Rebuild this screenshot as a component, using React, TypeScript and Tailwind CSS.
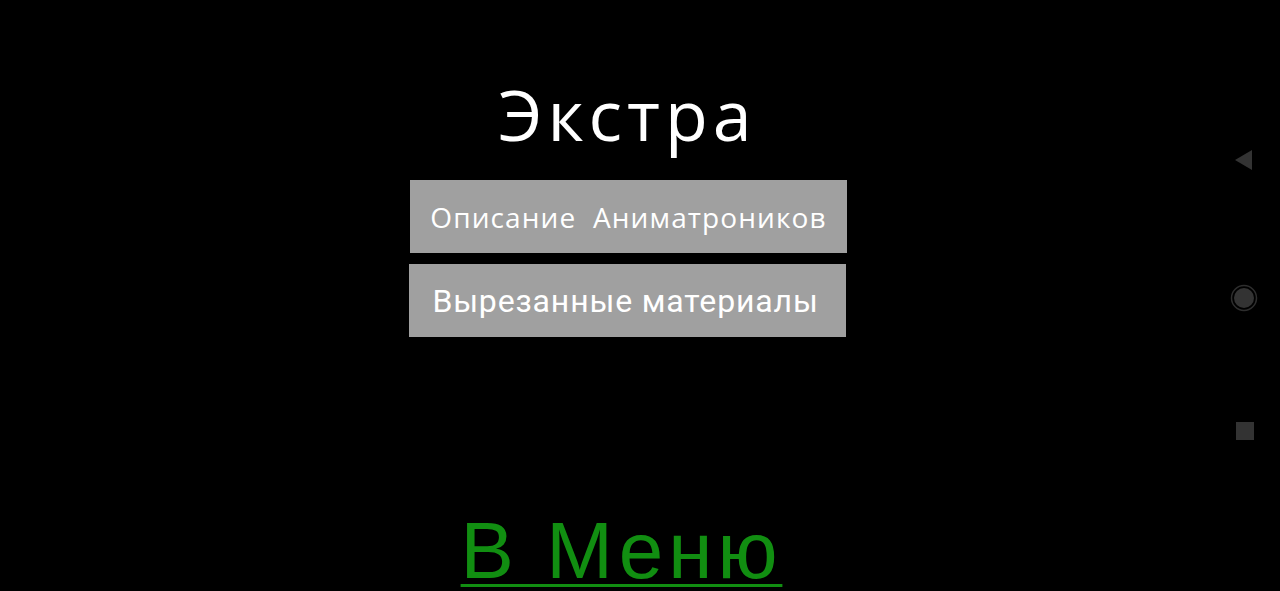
export default function App() {
  return (
    <div className="relative h-[591px] w-[1280px] overflow-hidden bg-black">
      <div className="flex h-full w-[1255px] flex-col items-center">
        <h1 className="mt-[72px] text-[70px] leading-[84px] tracking-[5px] text-white [font-family:'Open_Sans',sans-serif]">
          Экстра
        </h1>
        <div className="mt-[24px] flex flex-col items-center gap-[11px]">
          <button
            type="button"
            className="ml-[2px] h-[73px] w-[437px] bg-[#a0a0a0] text-[28px] tracking-[1.1px] text-white [font-family:'Open_Sans',sans-serif]"
          >
            Описание&nbsp; Аниматроников
          </button>
          <button
            type="button"
            className="h-[73px] w-[437px] bg-[#a0a0a0] pr-[4px] text-[32px] tracking-[0.85px] text-white [font-family:Roboto,sans-serif]"
          >
            Вырезанные материалы
          </button>
        </div>
        <a className="mt-[174px] mr-[12px] text-[80px] leading-[80px] tracking-[5px] text-[#118e11] underline decoration-[3px] underline-offset-[6px] [font-family:'Liberation_Sans',sans-serif]">
          В Меню
        </a>
      </div>
      <div className="absolute top-0 right-0 flex h-full w-[74px] flex-col items-center justify-between pt-[150px] pb-[151px]">
        <svg width="18" height="20" viewBox="0 0 18 20" className="mr-[-2px]">
          <polygon points="17,0 17,20 0,10" fill="#333333" />
        </svg>
        <svg width="28" height="28" viewBox="0 0 28 28" className="mt-[3px] mr-[-2px]">
          <circle cx="14" cy="14" r="12.5" fill="none" stroke="#2e2e2e" strokeWidth="1.5" />
          <circle cx="14" cy="14" r="10" fill="#333333" />
        </svg>
        <div className="mr-[-3px] h-[18px] w-[18px] bg-[#333333]" />
      </div>
    </div>
  );
}
